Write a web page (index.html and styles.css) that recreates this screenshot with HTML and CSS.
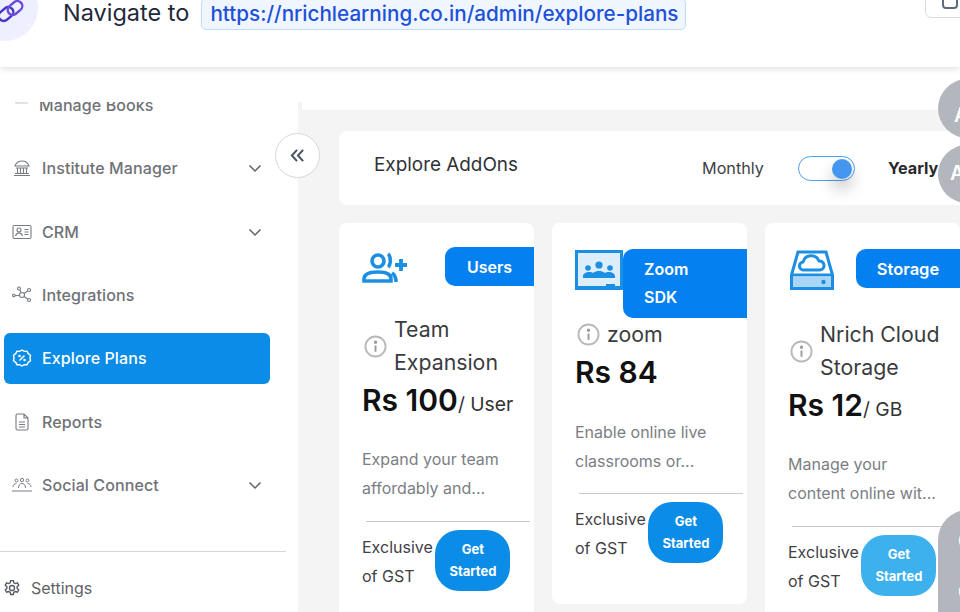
FILE: index.html
```html
<!DOCTYPE html>
<html lang="en">
<head>
    <meta charset="UTF-8">
    <meta name="viewport" content="width=device-width, initial-scale=1.0">
    <title>Explore Plans</title>
    <link rel="stylesheet" href="styles.css">
</head>
<body>
    <header class="topbar">
        <div class="logo-circle">
            <svg class="logo" viewBox="0 0 24 24" fill="none" stroke="#4338ca" stroke-width="2.4">
                <rect x="-1" y="10" width="16" height="10" rx="5" transform="rotate(-40 7 15)"/>
                <rect x="8" y="4" width="16" height="10" rx="5" transform="rotate(-40 16 9)" stroke="#6d4bd8"/>
            </svg>
        </div>
        <span class="nav-label">Navigate to</span>
        <a class="nav-url">https://nrichlearning.co.in/admin/explore-plans</a>
        <div class="top-action"><span class="top-action-glyph"></span></div>
    </header>

    <div class="layout">
        <aside class="sidebar">
            <div class="side-spacer"></div>
            <div class="side-scroll">
                <ul class="menu">
                    <li class="menu-item sub-item">
                        <svg class="icon" viewBox="0 0 20 20" fill="none" stroke="#c4c6ca" stroke-width="1.2"><path d="M4 0v8h12"/></svg>
                        <span>Manage Books</span>
                    </li>
                    <li class="menu-item">
                        <svg class="icon" viewBox="0 0 20 20" fill="none" stroke="#777b82" stroke-width="1.1"><path d="M3 8c1-3 4-5 7-5s6 2 7 5zM4 10h12M5.500 10v5M8.500 10v5M11.500 10v5M14.500 10v5M3 15.500h14M2 17.500h16"/></svg>
                        <span class="menu-text">Institute Manager</span>
                        <svg class="chevron" viewBox="0 0 14 14" fill="none" stroke="#5f6368" stroke-width="1.500"><path d="M1.500 4.500 7 10l5.500-5.500"/></svg>
                    </li>
                    <li class="menu-item">
                        <svg class="icon" viewBox="0 0 20 20" fill="none" stroke="#777b82" stroke-width="1.1"><rect x="1" y="3.500" width="18" height="13" rx="1.500"/><circle cx="7" cy="8" r="2"/><path d="M3.500 14c.5-2 2-3 3.500-3s3 1 3.500 3M12.500 7.500h4M12.500 10h4M12.500 12.500h4"/></svg>
                        <span class="menu-text">CRM</span>
                        <svg class="chevron" viewBox="0 0 14 14" fill="none" stroke="#5f6368" stroke-width="1.500"><path d="M1.500 4.500 7 10l5.500-5.500"/></svg>
                    </li>
                    <li class="menu-item">
                        <svg class="icon" viewBox="0 0 20 20" fill="none" stroke="#777b82" stroke-width="1.1"><circle cx="10" cy="10" r="2.500"/><circle cx="7" cy="3.500" r="1.500"/><circle cx="17" cy="5" r="1.500"/><circle cx="1.800" cy="10.500" r="1.300"/><circle cx="17" cy="15" r="1.500"/><path d="m8 5 1 2.500M15.700 6l-3.700 2.500M3 10.500h4.500M12 11.500l3.700 2.500"/></svg>
                        <span class="menu-text">Integrations</span>
                    </li>
                    <li class="menu-item active">
                        <svg class="icon" viewBox="0 0 20 20" fill="none" stroke="#fff" stroke-width="1.400"><path d="M10 2l2.300 1.400 2.700-.1 1.300 2.400 2.200 1.500-.5 2.800.5 2.800-2.200 1.500-1.300 2.400-2.700-.1L10 18l-2.300-1.400-2.700.1-1.300-2.400-2.200-1.500.5-2.800-.5-2.800 2.200-1.500L5 3.300l2.700.1z"/><path d="m7.500 12.500 5-5"/><circle cx="7.500" cy="8" r=".6"/><circle cx="12.500" cy="12" r=".6"/></svg>
                        <span class="menu-text">Explore Plans</span>
                    </li>
                    <li class="menu-item">
                        <svg class="icon" viewBox="0 0 20 20" fill="none" stroke="#777b82" stroke-width="1.1"><path d="M4 3.500A1.500 1.500 0 0 1 5.500 2H12l4 4v10.500a1.500 1.500 0 0 1-1.500 1.500h-9A1.500 1.500 0 0 1 4 16.500zM12 2v4h4M7 10h6M7 12.500h6M7 15h6"/></svg>
                        <span class="menu-text">Reports</span>
                    </li>
                    <li class="menu-item">
                        <svg class="icon" viewBox="0 0 20 20" fill="none" stroke="#777b82" stroke-width="1"><circle cx="10" cy="5" r="1.700"/><circle cx="4.500" cy="5.500" r="1.400"/><circle cx="15.500" cy="5.500" r="1.400"/><path d="M6.500 13c0-3 1.500-4.500 3.500-4.500s3.500 1.500 3.500 4.500M1 12c0-2 1.500-3.500 3.500-3.500M19 12c0-2-1.500-3.500-3.500-3.500M0 16h20"/></svg>
                        <span class="menu-text">Social Connect</span>
                        <svg class="chevron" viewBox="0 0 14 14" fill="none" stroke="#5f6368" stroke-width="1.500"><path d="M1.500 4.500 7 10l5.500-5.500"/></svg>
                    </li>
                </ul>
            </div>
            <div class="side-footer">
                <svg class="icon-gear" viewBox="0 0 20 20" fill="none" stroke="#55595f" stroke-width="1.500"><circle cx="10" cy="10" r="2.800"/><path d="M8.500 1.800h3l.5 2.400 1.700.9 2.300-.8 1.500 2.600-1.800 1.600v2l1.800 1.600-1.500 2.600-2.300-.8-1.700.9-.5 2.400h-3l-.5-2.400-1.700-.9-2.300.8-1.500-2.600 1.800-1.600v-2L2.500 6.900 4 4.300l2.300.8L8 4.200z"/></svg>
                <span>Settings</span>
            </div>
        </aside>

        <main class="main">
            <div class="main-strip"></div>
            <div class="content">
                <section class="addon-head">
                    <h2>Explore AddOns</h2>
                    <div class="billing">
                        <span class="billing-month">Monthly</span>
                        <span class="switch"><span class="knob"></span></span>
                        <span class="billing-year">Yearly</span>
                    </div>
                </section>

                <div class="cards">
                    <article class="card">
                        <div class="card-top">
                            <svg class="card-icon icon-users" viewBox="0 0 46 32" fill="none" stroke="#1c8fe3" stroke-width="3.600"><circle cx="16" cy="9" r="6"/><path d="M2 29v-2c0-5 6-7 14-7s13 2 13 7v2zM26 2c3 2 3 11 0 13M34 30c0-4-1-7-4-9"/><path d="M39 7v12M33 13h12" stroke-width="3.800"/></svg>
                            <span class="badge">Users</span>
                        </div>
                        <div class="plan-title title-users">
                            <svg class="info" viewBox="0 0 24 24" fill="none" stroke="#b9b9b9" stroke-width="2"><circle cx="12" cy="12" r="10.500"/><path d="M12 11v6.500" stroke="#9a9a9a"/><circle cx="12" cy="7.500" r=".8" stroke="#9a9a9a"/></svg>
                            <h3>Team Expansion</h3>
                        </div>
                        <p class="price">Rs 100<small>/ User</small></p>
                        <p class="desc desc-tall">Expand your team affordably and...</p>
                        <div class="card-foot">
                            <span class="gst">Exclusive of GST</span>
                            <a class="get-btn">Get Started</a>
                        </div>
                    </article>

                    <article class="card">
                        <div class="card-top">
                            <svg class="card-icon icon-class" viewBox="0 0 48 40"><rect width="48" height="40" fill="#1c8fe3"/><rect x="3" y="3" width="42" height="33" fill="#dcedfb"/><rect x="31" y="34" width="9" height="2" fill="#1c8fe3"/><g fill="#1c8fe3"><circle cx="24" cy="15" r="3.600"/><circle cx="13" cy="18" r="2.800"/><circle cx="35" cy="18" r="2.800"/><path d="M8 28v-2c0-2 3-4 6-4 2 0 3 .4 4 1 2-1.500 4-2 6-2s4 .5 6 2c1-.6 2-1 4-1 3 0 6 2 6 4v2z"/></g></svg>
                            <span class="badge badge-wide">Zoom SDK</span>
                        </div>
                        <div class="plan-title title-zoom">
                            <svg class="info" viewBox="0 0 24 24" fill="none" stroke="#b9b9b9" stroke-width="2"><circle cx="12" cy="12" r="10.500"/><path d="M12 11v6.500" stroke="#9a9a9a"/><circle cx="12" cy="7.500" r=".8" stroke="#9a9a9a"/></svg>
                            <h3>zoom</h3>
                        </div>
                        <p class="price">Rs 84</p>
                        <p class="desc">Enable online live classrooms or...</p>
                        <div class="card-foot">
                            <span class="gst">Exclusive of GST</span>
                            <a class="get-btn">Get Started</a>
                        </div>
                    </article>

                    <article class="card">
                        <div class="card-top">
                            <svg class="card-icon icon-drive" viewBox="0 0 44 40" fill="none" stroke="#1c8fe3" stroke-width="3"><path d="M1.500 25 8 2h28l6.500 23v13.500h-41z"/><path d="M1.500 25h41"/><rect x="3" y="26.500" width="38" height="10.500" fill="#a9d6f7" stroke="none"/><circle cx="33.500" cy="32" r="2.200" fill="#1c8fe3" stroke="none"/><path d="M14 20a4 4 0 0 1-1-8 8.500 8.500 0 0 1 16-1A4.500 4.500 0 0 1 30 20z"/></svg>
                            <span class="badge badge-storage">Storage</span>
                        </div>
                        <div class="plan-title title-storage">
                            <svg class="info" viewBox="0 0 24 24" fill="none" stroke="#b9b9b9" stroke-width="2"><circle cx="12" cy="12" r="10.500"/><path d="M12 11v6.500" stroke="#9a9a9a"/><circle cx="12" cy="7.500" r=".8" stroke="#9a9a9a"/></svg>
                            <h3>Nrich Cloud Storage</h3>
                        </div>
                        <p class="price">Rs 12<small>/ GB</small></p>
                        <p class="desc desc-tall">Manage your content online wit...</p>
                        <div class="card-foot">
                            <span class="gst">Exclusive of GST</span>
                            <a class="get-btn btn-hover">Get Started</a>
                        </div>
                    </article>
                </div>
            </div>
        </main>
    </div>

    <!-- overlays -->
    <button class="collapse-btn">
        <svg viewBox="0 0 16 16" fill="none" stroke="#4b5563" stroke-width="2.200"><path d="M7.500 2 2 8l5.500 6M14 2 8.500 8l5.500 6"/></svg>
    </button>
    <div class="float-pill pill-one"><span>A</span></div>
    <div class="float-pill pill-two"><span>A</span></div>
    <div class="float-pill pill-three"><span>C</span><span>C</span></div>
</body>
</html>
```

FILE: styles.css
```css
* {
    box-sizing: border-box;
}

html,
body {
    margin: 0;
    height: 612px;
    overflow: hidden;
}

body {
    font-family: Inter, "Liberation Sans", sans-serif;
    background: #fff;
    color: #333;
    position: relative;
}

/* top bar */
.topbar {
    height: 67px;
    display: flex;
    align-items: flex-start;
    background: #fff;
    box-shadow: 0 2px 6px rgba(0, 0, 0, 0.12);
    position: relative;
    z-index: 2;
    overflow: hidden;
}

.logo-circle {
    width: 66px;
    height: 66px;
    flex: none;
    margin: -25px 0 0 -28px;
    border-radius: 50%;
    background: #eef0ff;
    display: flex;
    align-items: flex-end;
    justify-content: flex-end;
    padding: 0 15px 18px 0;
}

.logo {
    width: 24px;
    height: 24px;
    overflow: visible;
}

.nav-label {
    margin: -2px 0 0 25px;
    font-size: 23.500px;
    line-height: 30px;
    color: #1f2937;
}

.nav-url {
    margin: -2px 0 0 12px;
    height: 32px;
    padding: 0 7px 0 8px;
    font-size: 20.650px;
    line-height: 30px;
    font-weight: 500;
    color: #2050d8;
    background: #eff6ff;
    border: 1px solid #bfdbfe;
    border-radius: 5px;
    white-space: nowrap;
}

.top-action {
    position: absolute;
    top: -20px;
    left: 925px;
    width: 50px;
    height: 38px;
    border: 1px solid #d9dbe0;
    border-radius: 6px;
}

.top-action-glyph {
    display: block;
    width: 16px;
    height: 28px;
    margin-left: 16px;
    border: 2px solid #5b6b85;
    border-radius: 4px;
}

/* page body */
.layout {
    display: flex;
    height: 545px;
}

.sidebar {
    width: 298px;
    flex: none;
    display: flex;
    flex-direction: column;
}

.side-spacer {
    height: 35px;
    flex: none;
}

.side-scroll {
    height: 449px;
    flex: none;
    overflow: hidden;
}

.menu {
    list-style: none;
    margin: -22.400px 0 0 4px;
    padding: 0;
    display: flex;
    flex-direction: column;
    gap: 12.300px;
    width: 266px;
}

.menu-item {
    height: 51px;
    flex: none;
    display: flex;
    align-items: center;
    gap: 10px;
    padding: 0 8px;
    border-radius: 6px;
    font-size: 16px;
    font-weight: 500;
    letter-spacing: 0.1px;
    color: #6f7277;
}

.menu-text {
    flex: 1;
}

.icon {
    width: 20px;
    height: 20px;
    flex: none;
}

.chevron {
    width: 14px;
    height: 14px;
    flex: none;
}

.sub-item {
    gap: 7px;
}

.active {
    background: #0b8ce6;
    color: #fff;
}

.side-footer {
    width: 286px;
    border-top: 1px solid #d5d7dc;
    display: flex;
    align-items: center;
    gap: 10px;
    padding: 26px 0 0 3px;
    font-size: 16px;
    color: #5f6368;
}

.icon-gear {
    width: 18px;
    height: 18px;
}

.main {
    flex: 1;
    min-width: 0;
    margin-top: 35px;
    background: #f4f4f5;
}

.main-strip {
    height: 8px;
    margin-left: 4px;
    background: #fff;
}

.content {
    padding: 21px 0 0 41px;
}

.addon-head {
    width: 660px;
    height: 74px;
    display: flex;
    align-items: center;
    padding-left: 35px;
    background: #fff;
    border-radius: 8px 0 0 8px;
}

.addon-head h2 {
    margin: -8px 0 0;
    font-size: 18.900px;
    font-weight: 400;
    color: #2f3237;
}

.billing {
    margin-left: 184px;
    display: flex;
    align-items: center;
    font-size: 16.200px;
    color: #3d4045;
}

.switch {
    width: 57px;
    height: 25px;
    margin: 0 33px 0 34px;
    padding: 2px 1px 2px 0;
    display: flex;
    justify-content: flex-end;
    border: 1px solid #4aa0f0;
    border-radius: 13px;
    background: #fff;
}

.knob {
    width: 20px;
    height: 20px;
    margin-right: 1px;
    border-radius: 50%;
    background: #4596ee;
    box-shadow: 0 10px 16px rgba(0, 0, 0, 0.24);
}

.billing-year {
    font-weight: 700;
    color: #26282c;
}

/* plan cards */
.cards {
    display: flex;
    align-items: flex-start;
    gap: 18px;
    margin-top: 18px;
    width: 640px;
}

.card {
    width: 195px;
    flex: none;
    padding: 24px 0 41px 23px;
    background: #fff;
    border-radius: 8px;
}

.card-top {
    display: flex;
    justify-content: space-between;
    align-items: flex-start;
}

.card-icon {
    flex: none;
}

.icon-users {
    width: 46px;
    height: 32px;
    margin-top: 5px;
}

.icon-class {
    width: 48px;
    height: 40px;
    margin-top: 3px;
}

.icon-drive {
    width: 44px;
    height: 40px;
    margin: 3px 0 0 2px;
}

.badge {
    width: 89px;
    height: 39px;
    display: flex;
    align-items: center;
    justify-content: center;
    background: #0580f0;
    color: #fff;
    font-size: 16px;
    font-weight: 600;
    border-radius: 10px 0 0 10px;
}

.badge-wide {
    width: 124px;
    height: 69px;
    margin-top: 2px;
    padding: 0 50px 2px 21px;
    justify-content: flex-start;
    line-height: 28px;
}

.badge-storage {
    width: 104px;
    margin-top: 2px;
    font-size: 16.500px;
}

.plan-title {
    display: flex;
    align-items: center;
    gap: 7px;
}

.plan-title h3 {
    margin: 0;
    font-size: 21.300px;
    line-height: 33px;
    font-weight: 400;
    color: #3a3c40;
}

.info {
    width: 23px;
    height: 23px;
    margin-left: 2px;
    flex: none;
}

.title-users {
    margin-top: 27px;
    width: 160px;
}

.title-zoom {
    margin-top: 0;
}

.title-storage {
    margin-top: 28px;
    width: 165px;
}

.price {
    margin: 3px 0 0;
    font-size: 30px;
    line-height: 36px;
    font-weight: 600;
    color: #111;
}

.price small {
    font-size: 19.300px;
    font-weight: 400;
    color: #333;
}

.desc {
    margin: 28px 15px 17px 0;
    font-size: 16px;
    line-height: 29px;
    color: #7b7e83;
}

.desc-tall {
    margin-top: 23px;
    margin-bottom: 18px;
}

.card-foot {
    margin: 0 4px 0 4px;
    padding-top: 8px;
    border-top: 1px solid #c8c9cc;
    display: flex;
}

.gst {
    width: 73.400px;
    flex: none;
    padding-top: 3px;
    margin-left: -4px;
    font-size: 16px;
    line-height: 29px;
    color: #3f4146;
}

.get-btn {
    width: 75px;
    height: 61px;
    flex: none;
    padding: 0 12px 1px;
    display: flex;
    align-items: center;
    justify-content: center;
    text-align: center;
    background: #0b8ce6;
    color: #fff;
    font-size: 13px;
    line-height: 22.500px;
    font-weight: 700;
    border-radius: 24px;
}

.btn-hover {
    background: #3db0ee;
}

/* things lying over the page */
.collapse-btn {
    position: absolute;
    left: 275px;
    top: 133px;
    width: 45px;
    height: 45px;
    padding: 14px;
    border: 1px solid #d8d8dc;
    border-radius: 50%;
    background: #fff;
    z-index: 3;
}

.float-pill {
    position: absolute;
    left: 938px;
    width: 60px;
    display: flex;
    flex-direction: column;
    padding-left: 16px;
    background: #b3b6bd;
    color: #fff;
    font-size: 20px;
    font-weight: 600;
    z-index: 3;
    border-radius: 30px;
}

.pill-one {
    top: 79px;
    height: 59px;
    padding-top: 24px;
}

.pill-two {
    top: 145px;
    height: 58px;
    padding: 16px 0 0 12px;
}

.pill-three {
    top: 510px;
    height: 130px;
    padding: 19px 0 0 20px;
    gap: 27px;
}
```
